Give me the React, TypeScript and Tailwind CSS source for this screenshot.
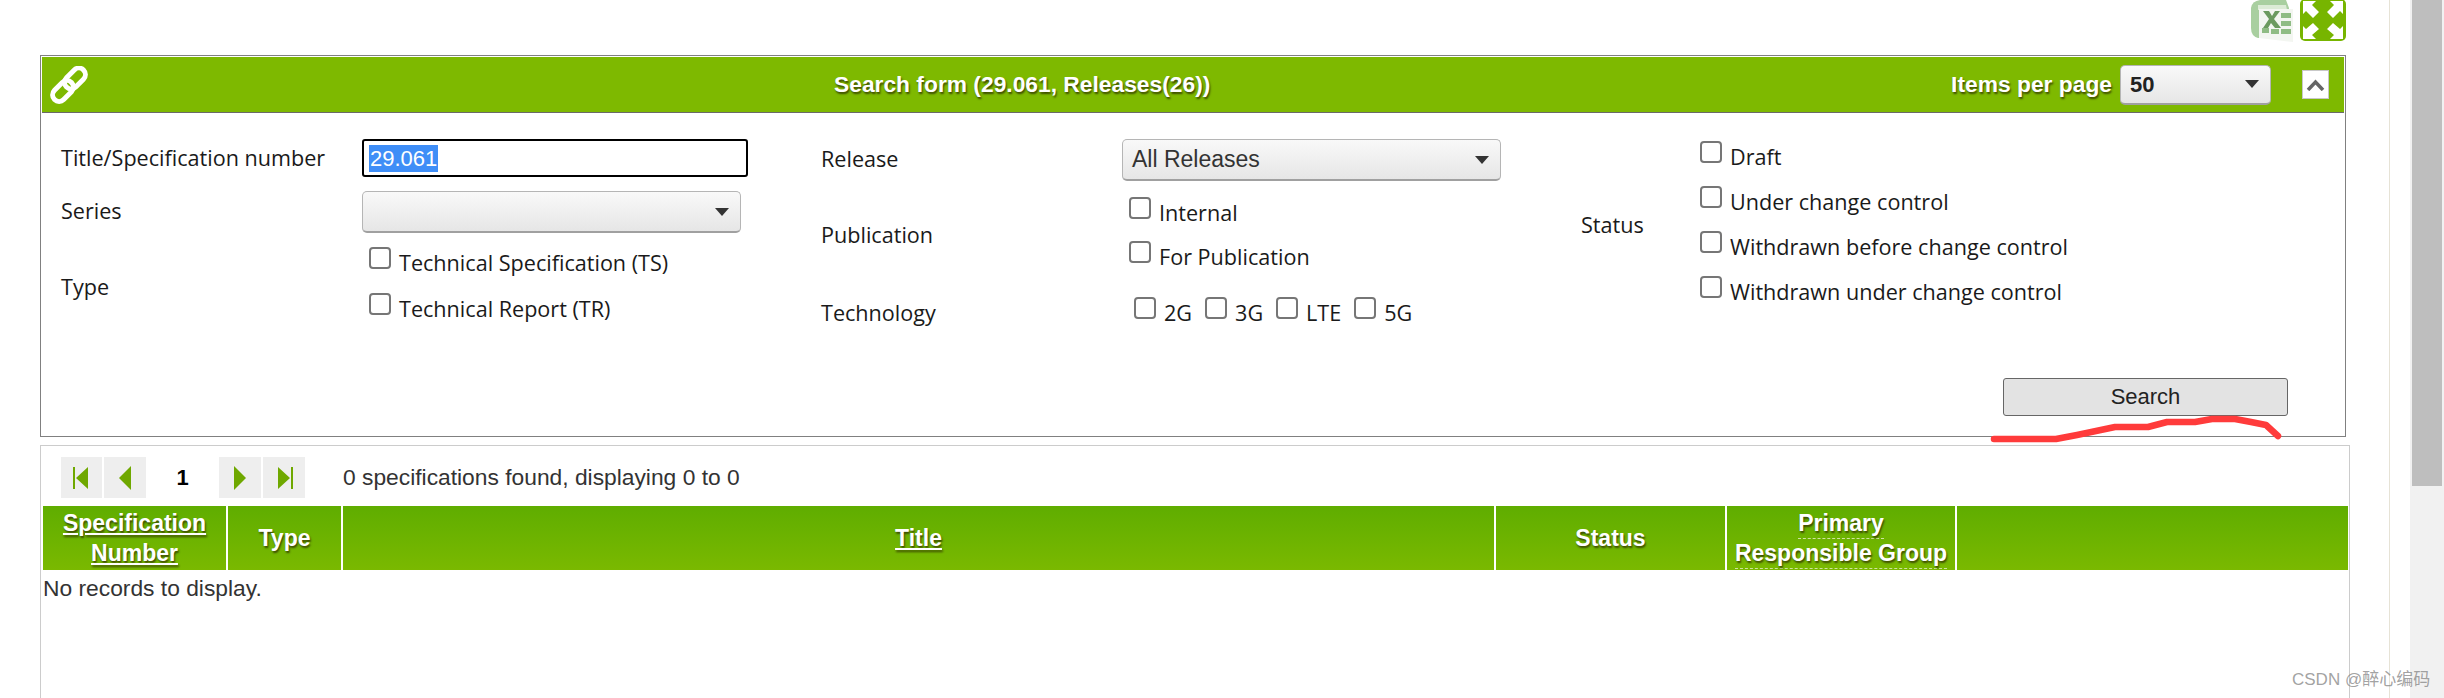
const labelFont = "font-['Open_Sans',sans-serif] text-[21.6px] text-[#1a1a1a]";
const arial = "font-['Liberation_Sans',sans-serif]";
const shadow = "[text-shadow:1px_2px_2px_#3c4a00]";

function Check({ label, step = "h-[45px]" }: { label: string; step?: string }) {
  return (
    <label className={`flex items-start gap-[8px] ${step}`}>
      <input type="checkbox" className="appearance-none w-[22px] h-[22px] shrink-0 bg-white border-2 border-[#767676] rounded-[4px]" />
      <span className={`${labelFont} leading-[32px] whitespace-nowrap`}>{label}</span>
    </label>
  );
}

function Caret() {
  return (
    <svg width="14" height="8" viewBox="0 0 14 8" className="shrink-0">
      <path d="M0 0h14L7 8z" fill="#333" />
    </svg>
  );
}

function SelectBox({ value, className, bold }: { value?: string; className: string; bold?: boolean }) {
  return (
    <div
      className={`flex items-center justify-between pl-[9px] pr-[11px] bg-gradient-to-b from-[#f9f9f9] to-[#e6e6e6] border border-[#b5b5b5] border-b-2 border-b-[#a0a0a0] rounded-[5px] ${className}`}
    >
      <span className={`${arial} ${bold ? "text-[22px] font-bold text-[#222]" : "text-[23px] text-[#333]"}`}>{value}</span>
      <Caret />
    </div>
  );
}

function LinkIcon() {
  return (
    <svg width="38" height="38" viewBox="0 0 38 38" fill="none" stroke="#fff" strokeWidth="5">
      <rect x="13" y="6" width="24" height="13" rx="6.5" transform="rotate(-45 25 12.5)" />
      <rect x="1" y="18.500" width="24" height="13" rx="6.5" transform="rotate(-45 13 25)" />
    </svg>
  );
}

function ExcelIcon() {
  return (
    <svg width="44" height="42" viewBox="0 0 44 42">
      <path d="M1 8Q2 1 10 0h26l3 8v30H8Q1 36 1 28z" fill="#a9cfa0" />
      <path d="M8 5h28l1 5H8z" fill="#dcebd6" />
      <path d="M9 9h34v33l-34-4z" fill="#f3f6f1" />
      <path d="M13 11h6l3 5 3-5h5l-6 8 7 9h-6l-4-5-3 5h-5l6-9z" fill="#6b9a5f" />
      <path d="M31 13h10v5H31zM31 21h10v5H31zM31 29h10v5H31zM21 29h8v5h-8zM12 28h7v5h-7z" fill="#8fbc84" />
    </svg>
  );
}

function ExpandIcon() {
  return (
    <svg width="46" height="42" viewBox="0 0 46 42">
      <rect width="46" height="42" y="-1" rx="5" fill="#77b500" />
      <path
        d="M3 1h13l-4 4 7 7-6 6-7-7-3 3zM43 1H30l4 4-7 7 6 6 7-7 3 3zM3 39h13l-4-4 7-6-6-6-7 6-3-3zM43 39H30l4-4-7-6 6-6 7 6 3-3z"
        fill="#fff"
      />
    </svg>
  );
}

function PagerButton({ d, width = "w-[42px]" }: { d: string; width?: string }) {
  return (
    <div className={`flex items-center justify-center h-[41px] bg-[#eeeeee] ${width}`}>
      <svg width="24" height="26" viewBox="0 0 24 26">
        <path d={d} fill="#6fa800" />
      </svg>
    </div>
  );
}

function HeaderCell({ className, children }: { className: string; children?: React.ReactNode }) {
  return (
    <div
      className={`flex flex-col items-center justify-center bg-gradient-to-b from-[#5fad00] to-[#7ab900] ${arial} font-bold text-[23px] leading-[30px] text-white text-center ${shadow} ${className}`}
    >
      {children}
    </div>
  );
}

export default function App() {
  return (
    <div className="relative flex h-[698px] w-[2444px] overflow-hidden bg-white">
      <main className="flex flex-col w-[2390px] border-r border-[#e6e3d6]">
        <div className="flex justify-end gap-[6px] h-[55px] pr-[43px]">
          <ExcelIcon />
          <ExpandIcon />
        </div>

        <section className="ml-10 w-[2306px] border border-[#808080] p-px">
          <header className="flex items-center h-[56px] bg-[#7eb900] border-b border-[#6a6a6a]">
            <div className="w-[792px] pl-[8px]">
              <LinkIcon />
            </div>
            <h1 className={`${arial} font-bold text-[22.800px] text-white whitespace-nowrap ${shadow}`}>
              Search form (29.061, Releases(26))
            </h1>
            <div className="ml-auto flex items-center pr-[15px]">
              <span className={`${arial} font-bold text-[22.800px] text-white ${shadow}`}>Items per page</span>
              <SelectBox value="50" bold className="ml-[8px] w-[151px] h-[40px]" />
              <button className="flex items-center justify-center ml-[31px] w-[27px] h-[29px] bg-white border border-[#c8c8c8]">
                <svg width="19" height="12" viewBox="0 0 19 12" fill="none" stroke="#666" strokeWidth="3.500">
                  <path d="M2 11l7.500-8 7.500 8" />
                </svg>
              </button>
            </div>
          </header>

          <div className="grid grid-cols-[760px_760px_1fr] h-[265px] pl-[19px]">
            <div className="grid grid-cols-[301px_1fr] grid-rows-[38px_42px_auto] gap-y-[14px] pt-[26px] content-start">
              <span className={`${labelFont} self-center`}>Title/Specification number</span>
              <div className="flex items-center w-[386px] h-[38px] pl-[5px] border-2 border-black rounded-[3px]">
                <span className={`${arial} text-[22px] leading-[27px] px-[1px] bg-[#3f8ef7] text-white`}>29.061</span>
              </div>
              <span className={`${labelFont} self-center pb-[2px]`}>Series</span>
              <SelectBox className="w-[379px] h-[42px]" />
              <span className={`${labelFont} self-center pb-[11px]`}>Type</span>
              <div className="pl-[7px]">
                <Check label="Technical Specification (TS)" step="h-[46px]" />
                <Check label="Technical Report (TR)" step="h-[46px]" />
              </div>
            </div>

            <div className="grid grid-cols-[301px_1fr] grid-rows-[42px_auto_auto] gap-y-[16px] pt-[26px] content-start">
              <span className={`${labelFont} self-center pb-[2px]`}>Release</span>
              <SelectBox value="All Releases" className="w-[379px] h-[42px]" />
              <span className={`${labelFont} self-center pb-[8px]`}>Publication</span>
              <div className="pl-[7px] h-[84px]">
                <Check label="Internal" step="h-[44px]" />
                <Check label="For Publication" step="h-[40px]" />
              </div>
              <span className={`${labelFont} self-center`}>Technology</span>
              <div className="flex gap-[13px] pl-[12px]">
                <Check label="2G" step="h-[32px]" />
                <Check label="3G" step="h-[32px]" />
                <Check label="LTE" step="h-[32px]" />
                <Check label="5G" step="h-[32px]" />
              </div>
            </div>

            <div className="grid grid-cols-[119px_1fr] pt-[28px] content-start">
              <span className={`${labelFont} self-center pb-[12px]`}>Status</span>
              <div>
                <Check label="Draft" />
                <Check label="Under change control" />
                <Check label="Withdrawn before change control" />
                <Check label="Withdrawn under change control" />
              </div>
            </div>
          </div>

          <div className="flex justify-end pr-[56px] pb-[19px]">
            <button className={`w-[285px] h-[38px] pb-[2px] bg-[#e3e3e3] border border-[#666] rounded-[3px] ${arial} text-[22px] text-[#222]`}>
              Search
            </button>
          </div>
        </section>

        <section className="flex-1 ml-10 mt-[8px] w-[2310px] border border-b-0 border-[#cccccc]">
          <div className="flex items-center h-[41px] mt-[11px] ml-[20px]">
            <PagerButton width="w-[41px]" d="M3 2h2v22H3zM18 2v22L6 13z" />
            <div className="w-[2px]" />
            <PagerButton d="M18 1v24L6 13z" />
            <span className={`${arial} font-bold text-[22px] text-black w-[73px] text-center`}>1</span>
            <PagerButton d="M6 1v24l12-12z" />
            <div className="w-[2px]" />
            <PagerButton d="M6 2v22l12-11zM19 2h2v22h-2z" />
            <span className={`${arial} text-[22.800px] text-[#333] ml-[38px]`}>0 specifications found, displaying 0 to 0</span>
          </div>

          <div className="flex gap-[2px] h-[64px] mt-[8px] ml-[2px] mr-[1px]">
            <HeaderCell className="w-[183px] underline">
              <span>Specification</span>
              <span>Number</span>
            </HeaderCell>
            <HeaderCell className="w-[113px]">Type</HeaderCell>
            <HeaderCell className="w-[1151px] underline">Title</HeaderCell>
            <HeaderCell className="w-[229px]">Status</HeaderCell>
            <HeaderCell className="w-[228px] pt-[2px]">
              <span className="border-b border-dashed border-[#cfe3a0] leading-[29px]">Primary</span>
              <span className="border-b border-dashed border-[#cfe3a0] leading-[29px]">Responsible Group</span>
            </HeaderCell>
            <HeaderCell className="flex-1" />
          </div>

          <p className={`${arial} text-[22.800px] text-[#333] leading-[36px] ml-[2px]`}>No records to display.</p>
        </section>
      </main>

      <div className="ml-auto w-[34px] px-[2px] bg-[#f1f1f1]">
        <div className="h-[486px] bg-[#bebebe]" />
      </div>

      {/* hand drawn annotation */}
      <svg className="absolute left-[1990px] top-[415px]" width="292" height="28" viewBox="0 0 292 28" fill="none">
        <path
          d="M4 24H66L87 20L125 12H158L177 7H205L222 4H245L261 7L276 10L288 21"
          stroke="#ff3b3b"
          strokeWidth="6.500"
          strokeLinecap="round"
          strokeLinejoin="round"
        />
      </svg>

      <span className="absolute left-[2292px] top-[667px] font-['Liberation_Sans','Noto_Sans_CJK_SC',sans-serif] text-[17px] text-[#8a8a8a]/80">
        CSDN @醉心编码
      </span>
    </div>
  );
}
